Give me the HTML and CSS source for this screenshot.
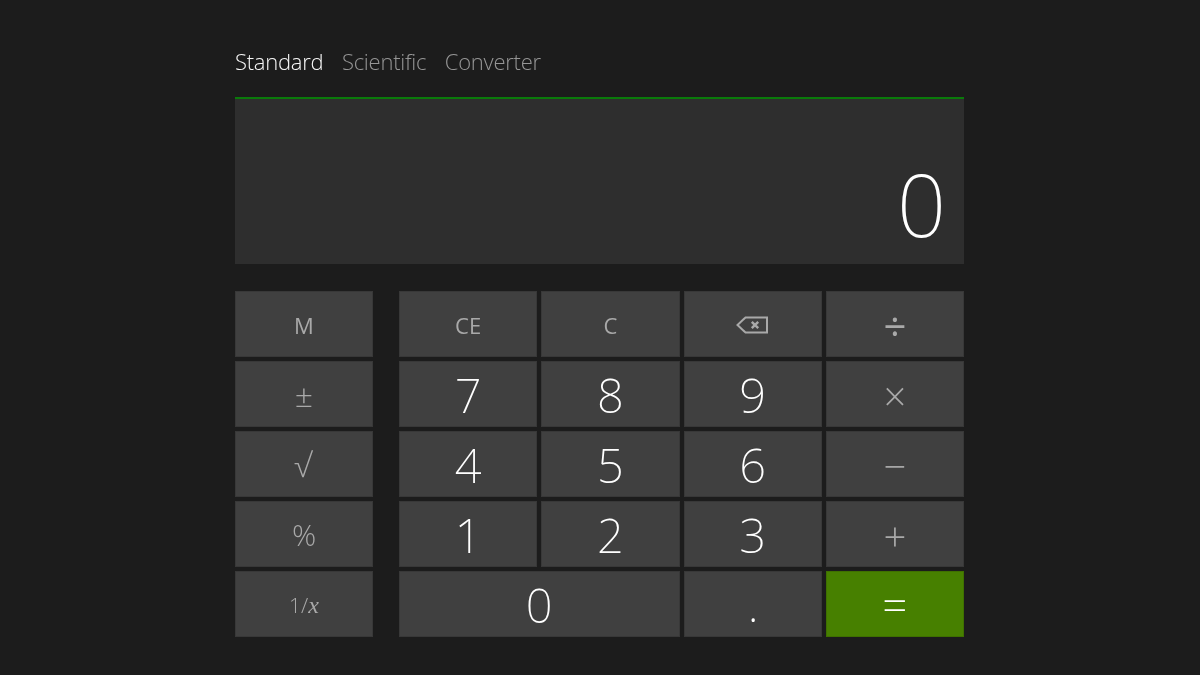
FILE: index.html
```html
<!DOCTYPE html>
<html lang="en">
<head>
<meta charset="utf-8">
<title>Calculator</title>
<link rel="stylesheet" href="styles.css">
</head>
<body>
<main class="calc">
  <nav class="tabs">
    <span class="tab active">Standard</span>
    <span class="tab">Scientific</span>
    <span class="tab">Converter</span>
  </nav>
  <div class="display"><span class="value">0</span></div>
  <div class="keypad">
    <div class="memory">
      <button class="key fn">M</button>
      <button class="key op pm">±</button>
      <button class="key op root">√</button>
      <button class="key op pct">%</button>
      <button class="key fn inv">1/<i>x</i></button>
    </div>
    <div class="main">
      <button class="key fn">CE</button>
      <button class="key fn">C</button>
      <button class="key fn icon" aria-label="Backspace">
        <svg class="back" width="34" height="18" viewBox="0 0 34 18" fill="none" stroke="#a9a9a9" stroke-width="2"><path d="M31 1.500H9.500L1.500 9l8 7.500H31z"/><path d="M15.800 5.800l6.400 6.400M22.200 5.800l-6.400 6.400" stroke-width="2.400"/></svg>
      </button>
      <button class="key op big div">÷</button>
      <button class="key num">7</button>
      <button class="key num">8</button>
      <button class="key num">9</button>
      <button class="key op big">×</button>
      <button class="key num">4</button>
      <button class="key num">5</button>
      <button class="key num">6</button>
      <button class="key op big">−</button>
      <button class="key num">1</button>
      <button class="key num">2</button>
      <button class="key num">3</button>
      <button class="key op big">+</button>
      <button class="key num wide">0</button>
      <button class="key num dot">.</button>
      <button class="key equals">=</button>
    </div>
  </div>
</main>
</body>
</html>
```
FILE: styles.css
```css
* { box-sizing: border-box; }
html, body { margin: 0; height: 100%; }
body {
  background: #1c1c1c;
  font-family: "Open Sans", "Noto Sans", sans-serif;
  font-weight: 300;
  overflow: hidden;
}
.calc {
  width: 729px;
  margin-left: 235px;
  padding-top: 45px;
  will-change: transform;
}
.tabs {
  display: flex;
  gap: 18.500px;
  height: 54px;
  border-bottom: 2px solid #0a7a0a;
  font-size: 22px;
  letter-spacing: -0.25px;
  line-height: 32px;
  color: #969696;
}
.tab.active { color: #f6f6f6; }
.display {
  height: 165px;
  background: #2e2e2e;
  display: flex;
  justify-content: flex-end;
  align-items: flex-end;
  padding: 0 18px 0 0;
}
.value {
  font-family: "Noto Sans", "Open Sans", sans-serif;
  font-weight: 200;
  font-size: 86px;
  line-height: 120px;
  color: #fff;
}
.keypad {
  display: flex;
  gap: 26px;
  margin-top: 27px;
}
.memory {
  width: 138px;
  display: grid;
  grid-auto-rows: 66px;
  gap: 4px;
}
.main {
  flex: 1;
  display: grid;
  grid-template-columns: repeat(4, 1fr);
  grid-auto-rows: 66px;
  gap: 4px;
}
.key {
  display: flex;
  align-items: center;
  justify-content: center;
  padding: 0;
  margin: 0;
  background: #404040;
  border: 1px solid #383838;
  color: #a9a9a9;
  font-family: inherit;
  font-weight: 400;
}
.fn { font-size: 22px; padding-top: 1px; }
.icon { padding-top: 2px; }
.op { font-size: 30px; font-weight: 350; }
.pm { font-size: 32px; }
.big { font-size: 40px; padding-top: 3px; }
.div { font-weight: 400; }
.root { font-size: 33px; padding-right: 2px; }
.num {
  font-family: "Noto Sans", "Open Sans", sans-serif;
  font-weight: 200;
  font-size: 47px;
  color: #fff;
  padding-top: 2px;
}
.wide { grid-column: span 2; }
.dot { align-items: flex-end; padding: 3px 0 0 1px; }
.inv { font-size: 21px; font-weight: 300; padding-top: 2px; }
.inv i { font-family: "Liberation Serif", serif; font-size: 24px; }
.equals {
  background: #478000;
  border-color: #3f7000;
  color: #fff;
  font-size: 44px;
  font-weight: 300;
}
```
